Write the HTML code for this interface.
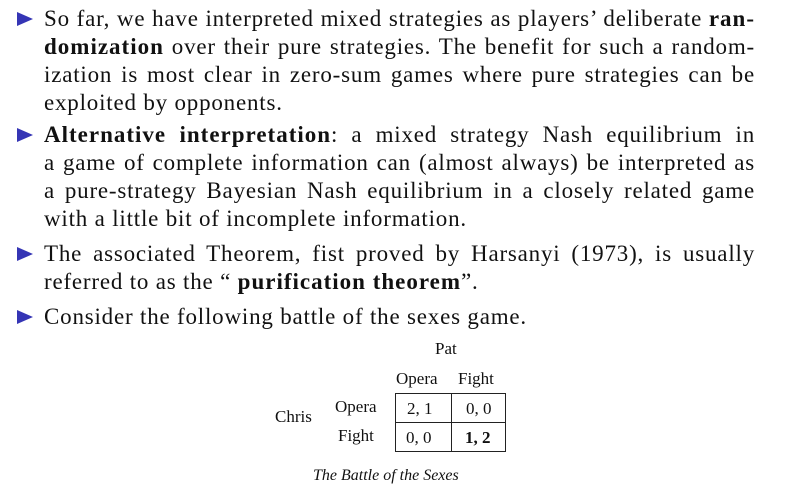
<!DOCTYPE html>
<html><head><meta charset="utf-8"><style>
body{margin:0;width:787px;height:495px;background:#fff;position:relative;overflow:hidden;font-family:"Liberation Serif",serif;color:#111}
.l{position:absolute;left:44px;width:711px;font-size:23px;letter-spacing:0.8px;line-height:28px;height:28px;white-space:nowrap;text-align:justify;text-align-last:justify}
.l b{letter-spacing:1px}
.n{text-align-last:left}
.b{position:absolute;left:17px;width:0;height:0;border-top:7px solid transparent;border-bottom:7px solid transparent;border-left:16px solid #3535b5}
.t{position:absolute;font-size:17px;line-height:18px}
</style></head><body>
<div class="b" style="top:12px"></div>
<div class="l" style="top:5px">So far, we have interpreted mixed strategies as players’ deliberate <b>ran-</b></div>
<div class="l" style="top:33px"><b>domization</b> over their pure strategies. The benefit for such a random-</div>
<div class="l" style="top:61px">ization is most clear in zero-sum games where pure strategies can be</div>
<div class="l n" style="top:89px">exploited by opponents.</div>
<div class="b" style="top:128px"></div>
<div class="l" style="top:121px"><b>Alternative interpretation</b>: a mixed strategy Nash equilibrium in</div>
<div class="l" style="top:149px">a game of complete information can (almost always) be interpreted as</div>
<div class="l" style="top:177px">a pure-strategy Bayesian Nash equilibrium in a closely related game</div>
<div class="l n" style="top:205px">with a little bit of incomplete information.</div>
<div class="b" style="top:247px"></div>
<div class="l" style="top:240px">The associated Theorem, fist proved by Harsanyi (1973), is usually</div>
<div class="l n" style="top:268px">referred to as the “ <b>purification theorem</b>”.</div>
<div class="b" style="top:310px"></div>
<div class="l n" style="top:303px">Consider the following battle of the sexes game.</div>
<div class="t" style="left:435px;top:340px">Pat</div>
<div class="t" style="left:396px;top:370px">Opera</div>
<div class="t" style="left:458px;top:370px">Fight</div>
<div class="t" style="left:275px;top:408px">Chris</div>
<div class="t" style="left:335px;top:398px">Opera</div>
<div class="t" style="left:338px;top:427px">Fight</div>
<div style="position:absolute;left:395px;top:393px;width:111px;height:59px;border:1px solid #222;box-sizing:border-box"></div>
<div style="position:absolute;left:451px;top:393px;width:1px;height:59px;background:#222"></div>
<div style="position:absolute;left:395px;top:422px;width:111px;height:1px;background:#222"></div>
<div class="t" style="left:407px;top:400px">2, 1</div>
<div class="t" style="left:466px;top:400px">0, 0</div>
<div class="t" style="left:406px;top:429px">0, 0</div>
<div class="t" style="left:465px;top:429px;font-weight:bold">1, 2</div>
<div class="t" style="left:313px;top:467px;font-style:italic;font-size:16px">The Battle of the Sexes</div>
</body></html>
